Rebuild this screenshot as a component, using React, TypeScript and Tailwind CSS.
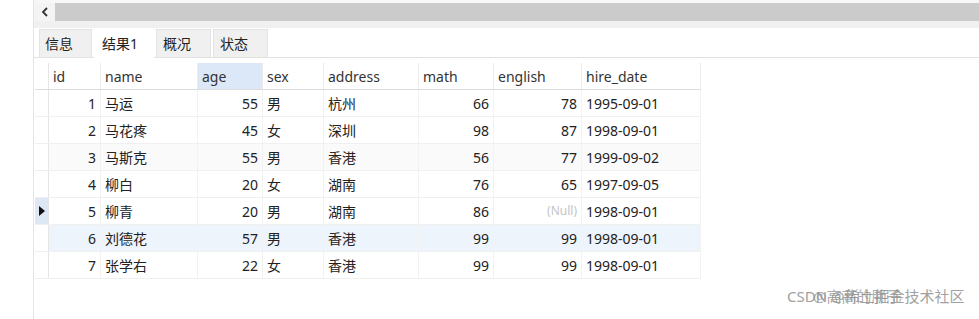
import React from "react";

type Align = "left" | "right";

interface Column {
  key: string;
  width: string;
  align: Align;
  highlight?: boolean;
}

const COLUMNS: Column[] = [
  { key: "id", width: "w-[52px]", align: "right" },
  { key: "name", width: "w-[97px]", align: "left" },
  { key: "age", width: "w-[65px]", align: "right", highlight: true },
  { key: "sex", width: "w-[61px]", align: "left" },
  { key: "address", width: "w-[95px]", align: "left" },
  { key: "math", width: "w-[75px]", align: "right" },
  { key: "english", width: "w-[88px]", align: "right" },
  { key: "hire_date", width: "w-[119px]", align: "left" },
];

const ROWS: (string | null)[][] = [
  ["1", "马运", "55", "男", "杭州", "66", "78", "1995-09-01"],
  ["2", "马花疼", "45", "女", "深圳", "98", "87", "1998-09-01"],
  ["3", "马斯克", "55", "男", "香港", "56", "77", "1999-09-02"],
  ["4", "柳白", "20", "女", "湖南", "76", "65", "1997-09-05"],
  ["5", "柳青", "20", "男", "湖南", "86", null, "1998-09-01"],
  ["6", "刘德花", "57", "男", "香港", "99", "99", "1998-09-01"],
  ["7", "张学右", "22", "女", "香港", "99", "99", "1998-09-01"],
];

const TABS = ["信息", "结果1", "概况", "状态"];

const FONT =
  "font-['Segoe_UI','Noto_Sans','Noto_Sans_CJK_SC',sans-serif]";

export default function App() {
  return (
    <div
      className={`relative flex w-[979px] h-[319px] overflow-hidden bg-white text-[14px] text-[#222] ${FONT}`}
    >
      {/* left gutter */}
      <div className="w-[34px] shrink-0 border-r border-[#e4e4e4] bg-white" />

      <div className="flex flex-col flex-1">
        {/* horizontal scrollbar */}
        <div className="flex h-[21px] pt-[3px] bg-[#f7f7f7]">
          <div className="flex w-[21px] items-center justify-center bg-[#f4f4f4]">
            <svg width="8" height="10" viewBox="0 0 8 10">
              <path
                d="M6 1 L2 5 L6 9"
                fill="none"
                stroke="#333"
                strokeWidth="1.8"
              />
            </svg>
          </div>
          <div className="flex-1 bg-[#cbcbcb]" />
        </div>
        <div className="h-[7px] bg-[#f0f0f0]" />

        {/* tabs */}
        <div className="flex h-[30px] pl-[5px] pt-px border-b border-[#e2e2e2]">
          {TABS.map((tab, i) => (
            <div
              key={tab}
              className={`flex items-center mr-[2px] text-[14px] text-[#222] ${
                i === 1
                  ? "w-[60px] bg-white pl-[8px] -mb-px"
                  : i === 0
                    ? "w-[53px] pl-[5px] bg-[#f0f0f0] border border-b-0 border-[#e3e3e3]"
                    : "w-[55px] pl-[6px] bg-[#f0f0f0] border border-b-0 border-[#e3e3e3]"
              }`}
            >
              {tab}
            </div>
          ))}
        </div>

        {/* grid */}
        <div className="flex flex-col self-start mt-[5px] ml-px">
          <div className="flex h-[27px] border-b border-[#dcdcdc]">
            <div className="w-[14px] border-r border-[#e6e6e6]" />
            {COLUMNS.map((c) => (
              <div
                key={c.key}
                className={`${c.width} flex items-center pl-[4px] border-r border-[#ececec] text-[#333] ${
                  c.highlight ? "bg-[#dce8f7]" : "bg-white"
                }`}
              >
                {c.key}
              </div>
            ))}
          </div>

          {ROWS.map((row, r) => (
            <div
              key={r}
              className={`flex h-[27px] border-b border-[#f0f0f0] ${
                r === 5 ? "bg-[#eef4fb]" : r === 2 ? "bg-[#fafafa]" : "bg-white"
              }`}
            >
              <div
                className={`w-[14px] flex items-center justify-center border-r border-[#e6e6e6] ${
                  r === 4 ? "bg-[#dde8f4]" : "bg-white"
                }`}
              >
                {r === 4 && (
                  <svg width="6" height="10" viewBox="0 0 6 10">
                    <path d="M0 0 L6 5 L0 10 Z" fill="#111" />
                  </svg>
                )}
              </div>
              {COLUMNS.map((c, ci) => {
                const v = row[ci];
                return (
                  <div
                    key={c.key}
                    className={`${c.width} flex items-center border-r border-[#f2f2f2] ${
                      c.align === "right"
                        ? "justify-end pr-[4px]"
                        : "pl-[4px]"
                    }`}
                  >
                    {v === null ? (
                      <span className="text-[12px] text-[#c4c4c4]">(Null)</span>
                    ) : (
                      v
                    )}
                  </div>
                );
              })}
            </div>
          ))}
        </div>
      </div>

      {/* watermark */}
      <div className="absolute left-[787px] top-[285px] text-[15px] text-[#8a8a8a] opacity-80 whitespace-nowrap">
        CSDN @稀土掘金技术社区
      </div>
      <div className="absolute left-[813px] top-[285px] text-[15px] text-[#8a8a8a] opacity-70 whitespace-nowrap">
        @高高的胖子
      </div>
    </div>
  );
}
